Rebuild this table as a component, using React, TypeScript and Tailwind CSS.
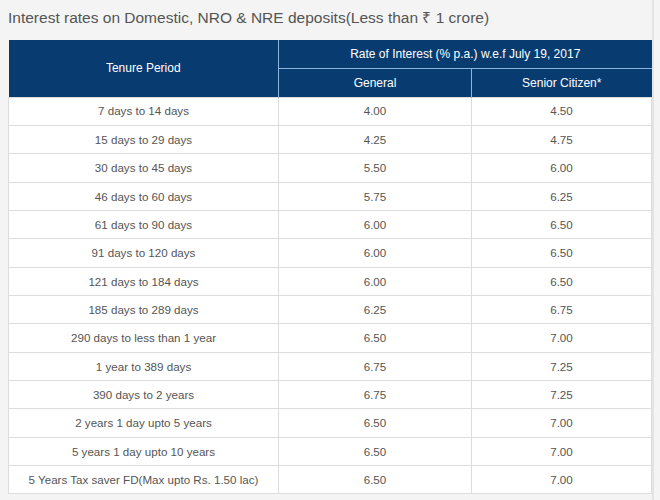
const rows: [string, string, string][] = [
  ['7 days to 14 days', '4.00', '4.50'],
  ['15 days to 29 days', '4.25', '4.75'],
  ['30 days to 45 days', '5.50', '6.00'],
  ['46 days to 60 days', '5.75', '6.25'],
  ['61 days to 90 days', '6.00', '6.50'],
  ['91 days to 120 days', '6.00', '6.50'],
  ['121 days to 184 days', '6.00', '6.50'],
  ['185 days to 289 days', '6.25', '6.75'],
  ['290 days to less than 1 year', '6.50', '7.00'],
  ['1 year to 389 days', '6.75', '7.25'],
  ['390 days to 2 years', '6.75', '7.25'],
  ['2 years 1 day upto 5 years', '6.50', '7.00'],
  ['5 years 1 day upto 10 years', '6.50', '7.00'],
  ['5 Years Tax saver FD(Max upto Rs. 1.50 lac)', '6.50', '7.00'],
]

export default function App() {
  return (
    <div className="w-[660px] h-[500px] overflow-hidden bg-[#f4f4f4] font-['Liberation_Sans',Arial,sans-serif]">
      <div className="w-[654px] h-full border-r-[2px] border-[#e4e4e4] pl-2">
        <h2 className="pt-[8px] text-[15.5px] leading-[20px] text-[#555]">
          Interest rates on Domestic, NRO &amp; NRE deposits(Less than ₹ 1 crore)
        </h2>
        <table className="mt-[12px] w-[643px] table-fixed border-collapse text-[11.6px] text-[#555]">
          <colgroup>
            <col className="w-[270px]" />
            <col className="w-[193px]" />
            <col className="w-[180px]" />
          </colgroup>
          <thead className="bg-[#083b6f] text-white text-[12px]">
            <tr className="h-[28px]">
              <th rowSpan={2} className="font-normal border-r border-[#8db4dc]">Tenure Period</th>
              <th colSpan={2} className="font-normal border-b border-[#8db4dc]">
                Rate of Interest (% p.a.) w.e.f July 19, 2017
              </th>
            </tr>
            <tr className="h-[29px]">
              <th className="font-normal border-r border-[#8db4dc]">General</th>
              <th className="font-normal">Senior Citizen*</th>
            </tr>
          </thead>
          <tbody className="bg-white">
            {rows.map(([tenure, general, senior]) => (
              <tr key={tenure} className="h-[28.35px] border border-[#dddddd]">
                <td className="text-center border-r border-[#dddddd]">{tenure}</td>
                <td className="text-center border-r border-[#dddddd]">{general}</td>
                <td className="text-center">{senior}</td>
              </tr>
            ))}
          </tbody>
        </table>
      </div>
    </div>
  )
}
